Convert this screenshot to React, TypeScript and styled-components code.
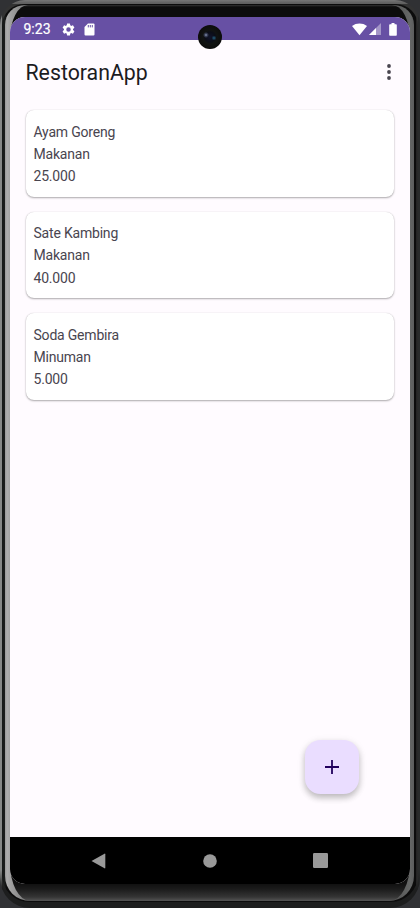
import React from 'react';
import styled, { createGlobalStyle } from 'styled-components';

const GlobalStyle = createGlobalStyle`
  * { box-sizing: border-box; }
  body { margin: 0; background: #303134; font-family: Roboto, sans-serif; overflow: hidden; }
`;

/* Device body: nested shells, from the metal rim inwards to the glass. */
const Rim = styled.div`
  width: 420px;
  height: 908px;
  padding: 4px 2px 6px;
  border-radius: 25px 25px 30px 30px;
  overflow: hidden;
  background:
    linear-gradient(#777 0, #606060 3px, #606060 4px, transparent 4px) 0 0 / 100% 40px no-repeat,
    linear-gradient(transparent 870px, #1d1e1e 890px),
    linear-gradient(90deg, #858786 0, #858786 2px, #333 2px, #333 418px, #292b2b 418px);
`;
const Groove = styled.div`
  height: 100%;
  padding: 1px 4px 1px 3px;
  border-radius: 22px 22px 27px 27px;
  background: linear-gradient(90deg, #151817 0, #1b1d1c 3px, #0c0c0c 4px, #0c0c0c 414px, #3c3c3c 415px, #151515 416px);
`;
const Chamfer = styled.div`
  height: 100%;
  padding: 0 4px 0 5px;
  border-radius: 20px 20px 25px 25px;
  overflow: hidden;
  background: linear-gradient(90deg, #969696 0, #adadad 2px, #a2a2a2 5px, #888 16px, #333 30px, #333 375px, #555 390px, #656766 405px, #5c5d5d 409px);
`;
const Glass = styled.div`
  height: 100%;
  padding: 12px 0 16px;
  border-radius: 18px 18px 20px 20px / 34px 34px 38px 38px;
  background: linear-gradient(#333 0, #0c0c0c 2px, #0c0c0c 860px, #111 879px, #1b1b1b 884px, #353535 892px, #555 896px);
`;
const Screen = styled.div`
  position: relative;
  display: flex;
  flex-direction: column;
  width: 400px;
  height: 867px;
  border-radius: 15px;
  overflow: hidden;
  background: #fffbff;
`;
const StatusBar = styled.header`
  display: flex;
  align-items: center;
  justify-content: space-between;
  flex: 0 0 23px;
  padding: 1px 13.5px 0;
  background: #6750a4;
  color: #fff;
`;
const StatusGroup = styled.div<{ $gap: number }>`
  display: flex;
  align-items: center;
  gap: ${(p) => p.$gap}px;
  svg { display: block; }
`;
const Clock = styled.span`
  width: 29.5px;
  font-size: 14px;
  line-height: 22px;
  font-weight: 400;
  -webkit-text-stroke: 0.2px #fff;
  white-space: nowrap;
`;
const Camera = styled.div`
  position: absolute;
  left: 188px;
  top: 8px;
  width: 24px;
  height: 24px;
  border-radius: 50%;
  background:
    radial-gradient(circle at 8px 10px, #a9b4cc 0, #47506c 1px, transparent 3px),
    radial-gradient(circle at 16px 13px, #246080 0, transparent 2.5px),
    radial-gradient(circle at 12px 12px, #11142a 0, #0b0d17 5px, #111312 7px, #0c0c0c 12px);
`;
const AppBar = styled.div`
  display: flex;
  align-items: center;
  justify-content: space-between;
  flex: 0 0 64px;
  padding: 0 19.5px 0 15.5px;
`;
const Title = styled.h1`
  margin: 2px 0 0;
  color: #1c1b1f;
  font-size: 21.3px;
  line-height: 28px;
  font-weight: 400;
`;
const MenuButton = styled.button`
  display: flex;
  padding: 0;
  border: 0;
  background: none;
`;
const List = styled.main`
  display: flex;
  flex: 1;
  flex-direction: column;
  gap: 15px;
  padding: 6px 16px 0;
`;
const Card = styled.article`
  height: 86.7px;
  padding: 10.6px 7.5px;
  border-radius: 8px;
  background: #fff;
  box-shadow: 0 1px 2px rgba(0, 0, 0, 0.32), 0 0 1px rgba(0, 0, 0, 0.18);
`;
const Line = styled.p`
  margin: 0;
  color: #49454f;
  font-size: 14px;
  letter-spacing: -0.2px;
  line-height: 22.2px;
`;
const Fab = styled.button`
  position: absolute;
  right: 51px;
  bottom: 90px;
  display: grid;
  place-items: center;
  width: 54px;
  height: 54px;
  padding: 0;
  border: 0;
  border-radius: 15.5px;
  background: #eaddff;
  box-shadow: 0 4px 6px rgba(0, 0, 0, 0.2), 0 2px 9px rgba(0, 0, 0, 0.1);
`;
const NavBar = styled.nav`
  display: grid;
  grid-template-columns: repeat(3, 111px);
  justify-content: center;
  place-items: center;
  flex: 0 0 47px;
  background: #000;
  svg { display: block; }
`;
const BackIcon = styled.svg`
  margin-right: 2px;
`;
const RecentsIcon = styled.svg`
  margin-right: 2px;
`;

const dishes = [
  { name: 'Ayam Goreng', kind: 'Makanan', price: '25.000' },
  { name: 'Sate Kambing', kind: 'Makanan', price: '40.000' },
  { name: 'Soda Gembira', kind: 'Minuman', price: '5.000' },
];

const GearIcon = () => (
  <svg width="15" height="15" viewBox="0 0 24 24" fill="#fff">
    <path d="M19.14 12.94c.04-.3.06-.61.06-.94s-.02-.64-.07-.94l2.03-1.58a.49.49 0 0 0 .12-.61l-1.92-3.32a.49.49 0 0 0-.59-.22l-2.39.96c-.5-.38-1.03-.7-1.62-.94l-.36-2.54a.48.48 0 0 0-.48-.41h-3.84c-.24 0-.43.17-.47.41l-.36 2.54c-.59.24-1.13.57-1.62.94l-2.39-.96a.48.48 0 0 0-.59.22L2.74 8.87c-.12.21-.08.47.12.61l2.03 1.58c-.05.3-.09.63-.09.94s.02.64.07.94l-2.03 1.58a.49.49 0 0 0-.12.61l1.92 3.32c.12.22.37.29.59.22l2.39-.96c.5.38 1.03.7 1.62.94l.36 2.54c.05.24.24.41.48.41h3.84c.24 0 .44-.17.47-.41l.36-2.54c.59-.24 1.13-.56 1.62-.94l2.39.96c.22.08.47 0 .59-.22l1.92-3.32a.48.48 0 0 0-.12-.61zM12 15.6A3.6 3.6 0 1 1 12 8.4a3.6 3.6 0 0 1 0 7.2z" />
  </svg>
);
const CardIcon = () => (
  <svg width="11" height="13" viewBox="0 0 11 13">
    <path d="M4 .5h5.5a1 1 0 0 1 1 1v10a1 1 0 0 1-1 1h-8a1 1 0 0 1-1-1V4z" fill="#fff" />
    <path d="M4.3 2v2.4M6.3 2v2.4M8.3 2v2.4" stroke="#6750a4" strokeWidth="1" />
  </svg>
);
const WifiIcon = () => (
  <svg width="15" height="13" viewBox="0 0 15 13">
    <path d="M0 3C4.4-.3 10.6-.3 15 3L7.5 12.2z" fill="#fff" />
  </svg>
);
const SignalIcon = () => (
  <svg width="12" height="12" viewBox="0 0 12 12">
    <path d="M12 0v12H0z" fill="#a496c8" />
    <path d="M7 5v7H0z" fill="#fff" />
  </svg>
);
const BatteryIcon = () => (
  <svg width="8" height="13" viewBox="0 0 8 13">
    <path d="M2.5 0h3v1.2H7a.8.8 0 0 1 .8.8v10a.8.8 0 0 1-.8.8H1a.8.8 0 0 1-.8-.8V2A.8.8 0 0 1 1 1.2h1.5z" fill="#fff" />
  </svg>
);

export default function App() {
  return (
    <>
      <GlobalStyle />
      <Rim>
        <Groove>
          <Chamfer>
            <Glass>
              <Screen>
                <StatusBar>
                  <StatusGroup $gap={8}>
                    <Clock>9:23</Clock>
                    <StatusGroup $gap={8}>
                      <GearIcon />
                      <CardIcon />
                    </StatusGroup>
                  </StatusGroup>
                  <StatusGroup $gap={2}>
                    <WifiIcon />
                    <StatusGroup $gap={8}>
                      <SignalIcon />
                      <BatteryIcon />
                    </StatusGroup>
                  </StatusGroup>
                </StatusBar>
                <AppBar>
                  <Title>RestoranApp</Title>
                  <MenuButton aria-label="Menu">
                    <svg width="4" height="16" viewBox="0 0 4 16" fill="#49454f">
                      <circle cx="2" cy="2" r="1.9" />
                      <circle cx="2" cy="8" r="1.9" />
                      <circle cx="2" cy="14" r="1.9" />
                    </svg>
                  </MenuButton>
                </AppBar>
                <List>
                  {dishes.map((d) => (
                    <Card key={d.name}>
                      <Line>{d.name}</Line>
                      <Line>{d.kind}</Line>
                      <Line>{d.price}</Line>
                    </Card>
                  ))}
                </List>
                <NavBar>
                  <BackIcon width="15" height="16" viewBox="0 0 15 16"><path d="M.5 8 13.5.7q.8-.3.8.5v13.6q0 .8-.8.5z" fill="#999" /></BackIcon>
                  <svg width="14" height="14" viewBox="0 0 14 14"><circle cx="7" cy="7" r="6.8" fill="#999" /></svg>
                  <RecentsIcon width="15" height="15" viewBox="0 0 15 15"><rect width="15" height="15" rx="1.2" fill="#999" /></RecentsIcon>
                </NavBar>
                <Fab aria-label="Tambah">
                  <svg width="14" height="14" viewBox="0 0 14 14"><path d="M7 0v14M0 7h14" stroke="#21005d" strokeWidth="1.8" /></svg>
                </Fab>
                <Camera />
              </Screen>
            </Glass>
          </Chamfer>
        </Groove>
      </Rim>
    </>
  );
}
